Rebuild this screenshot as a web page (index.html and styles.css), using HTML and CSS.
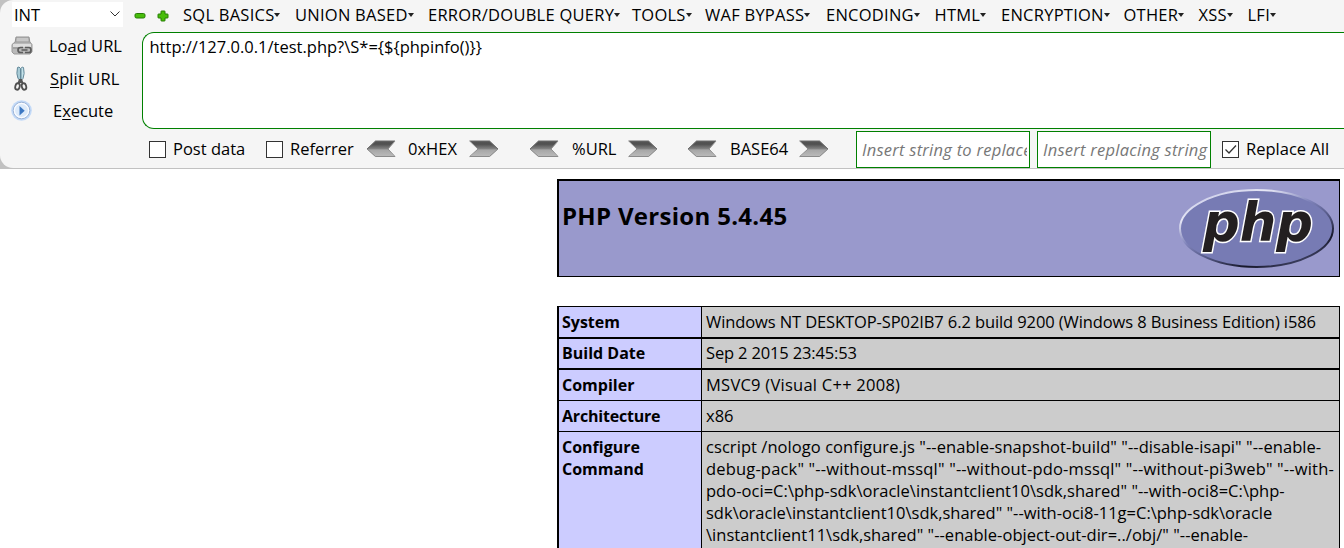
FILE: index.html
```html
<!DOCTYPE html>
<html lang="en">
<head>
<meta charset="utf-8">
<title>phpinfo()</title>
<link rel="stylesheet" href="styles.css">
</head>
<body>
<svg width="0" height="0" class="defs">
  <defs>
    <linearGradient id="steel" x1="0" y1="0" x2="0" y2="1">
      <stop offset="0" stop-color="#555"/><stop offset=".2" stop-color="#505050"/><stop offset=".5" stop-color="#858585"/><stop offset=".55" stop-color="#a6a6a6"/><stop offset="1" stop-color="#bcbcbc"/>
    </linearGradient>
    <symbol id="right" viewBox="0 0 30 18">
      <path d="M.7 1H20.5L29 9l-8.500 8H.7L9 9z" fill="url(#steel)"/>
      <path d="M.7 1H20.500L29 9" fill="none" stroke="#6a6a6a"/>
      <path d="M29 9l-8.500 7.500H.7L9 9 .7 1" fill="none" stroke="#8b8b8b"/>
    </symbol>
    <symbol id="left" viewBox="0 0 30 18">
      <path d="M29 1H9.500L1 9l8.500 8H29L22 9z" fill="url(#steel)"/>
      <path d="M29 1H9.500L1 9" fill="none" stroke="#6a6a6a"/>
      <path d="M1 9l8.500 7.500H29L22 9 29 1" fill="none" stroke="#8b8b8b"/>
    </symbol>
  </defs>
</svg>
<div class="frame">
<div class="toolbar">
  <div class="top">
    <div class="select"><span>INT</span><svg width="10" height="6" viewBox="0 0 10 6"><path d="M.5.5 5 5 9.500.5" fill="none" stroke="#333"/></svg></div>
    <svg class="minus" width="12" height="12" viewBox="0 0 12 12"><rect x="1" y="3.500" width="10" height="4.500" rx="1.500" fill="#48bd0b" stroke="#267d05"/></svg>
    <svg class="plus" width="12" height="12" viewBox="0 0 12 12"><path d="M4 1.500Q4 1 4.500 1h3Q8 1 8 1.500V4h2.500q.5 0 .5.500v3q0 .5-.5.500H8v2.500q0 .5-.5.500h-3Q4 11 4 10.500V8H1.500Q1 8 1 7.500v-3Q1 4 1.500 4H4z" fill="#48bd0b" stroke="#267d05"/></svg>
    <nav class="menu">
      <span>SQL BASICS</span><span>UNION BASED</span><span>ERROR/DOUBLE QUERY</span><span>TOOLS</span><span>WAF BYPASS</span><span>ENCODING</span><span>HTML</span><span>ENCRYPTION</span><span>OTHER</span><span>XSS</span><span>LFI</span>
    </nav>
  </div>
  <div class="middle">
    <div class="actions">
      <div class="action">
        <svg width="22" height="22" viewBox="0 0 22 22"><path d="M5 2h13l1 6H4z" fill="#b5b5b5" stroke="#929292"/><path d="M6 4h11M6 6h11" stroke="#d8d8d8"/><path d="M1 9.500 4 7h15l2 2.500V17l-2 2H3l-2-2z" fill="#b9b9b9" stroke="#999"/><path d="M2 9h18v3H2z" fill="#dedede"/><path d="M2 13h6" stroke="#8b8b8b"/><path d="M12 12.500H9.500Q7 12.500 7 15t2.500 2.500H12M14 12.500h4q2 0 2 2.500t-2 2.500h-4M10.500 15h6" fill="none" stroke="#5c5c5c" stroke-width="1.700"/></svg>
        <span class="load">Lo<u>a</u>d URL</span>
      </div>
      <div class="action">
        <svg width="22" height="26" viewBox="0 0 22 26"><path d="M6.500 1.500q-1.500 6.500.5 11l2.500 2V2.500Q8 0 6.500 1.500z" fill="#a8cbd6" stroke="#64899a"/><path d="M12.500 1.500q1.500 6.500-.5 11l-2 2V2.500Q11 0 12.500 1.500z" fill="#c4e2ea" stroke="#64899a"/><path d="M8 13h3l1.500 4h-6z" fill="#555"/><ellipse cx="6.500" cy="20.500" rx="2.200" ry="3.300" fill="none" stroke="#505050" stroke-width="1.800" transform="rotate(15 6.500 20.500)"/><ellipse cx="13" cy="20.500" rx="2.200" ry="3.300" fill="none" stroke="#505050" stroke-width="1.800" transform="rotate(-15 13 20.500)"/></svg>
        <span class="split"><u>S</u>plit URL</span>
      </div>
      <div class="action">
        <svg width="22" height="22" viewBox="0 0 22 22"><circle cx="10.500" cy="10.500" r="10.300" fill="#c3daf8"/><circle cx="10.500" cy="10.500" r="8.300" fill="#fafcff" stroke="#9bb3d6"/><circle cx="10.500" cy="10.500" r="6.500" fill="#dceafa"/><path d="M8.500 6v9.500l5.200-4.700z" fill="#3c78c3"/></svg>
        <span class="exec">E<u>x</u>ecute</span>
      </div>
    </div>
    <div class="url">http://127.0.0.1/test.php?\S*={${phpinfo()}}</div>
  </div>
  <div class="options">
    <i class="check"></i><span>Post data</span>
    <i class="check"></i><span>Referrer</span>
    <svg width="30" height="18"><use href="#left"/></svg><span>0xHEX</span><svg width="30" height="18"><use href="#right"/></svg>
    <svg width="30" height="18"><use href="#left"/></svg><span>%URL</span><svg width="30" height="18"><use href="#right"/></svg>
    <svg width="30" height="18"><use href="#left"/></svg><span>BASE64</span><svg width="30" height="18"><use href="#right"/></svg>
    <div class="field"><span>Insert string to replace</span></div>
    <div class="field"><span>Insert replacing string</span></div>
    <i class="check"><svg width="15" height="15" viewBox="0 0 15 15"><path d="M2.500 7.500 6 11l7-7.500" fill="none" stroke="#333" stroke-width="1.300"/></svg></i><span>Replace All</span>
  </div>
</div>
</div>
<main class="page">
  <header class="banner">
    <h1>PHP Version 5.4.45</h1>
    <svg class="logo" width="158" height="82" viewBox="0 0 158 82">
      <defs>
        <linearGradient id="rim" x1=".15" y1="0" x2=".85" y2="1">
          <stop offset="0" stop-color="#c5c7e6"/><stop offset=".2" stop-color="#e6e7f5"/><stop offset=".42" stop-color="#8084bb"/><stop offset=".6" stop-color="#555987"/><stop offset=".8" stop-color="#16172a"/><stop offset="1" stop-color="#53567f"/>
        </linearGradient>
      </defs>
      <ellipse cx="78.500" cy="40.500" rx="76.500" ry="38.500" fill="#777bb4" stroke="url(#rim)" stroke-width="2"/>
      <text class="mark" x="25" y="53" textLength="110" lengthAdjust="spacingAndGlyphs">php</text>
    </svg>
  </header>
  <section class="info">
    <div class="key">System</div><div class="val"><span class="sys">Windows NT DESKTOP-SP02IB7 6.2 build 9200 (Windows 8 Business Edition) i586</span></div>
    <div class="key thick">Build Date</div><div class="val thick"><span class="date">Sep 2 2015 23:45:53</span></div>
    <div class="key thick low">Compiler</div><div class="val thick low"><span class="comp">MSVC9 (Visual C++ 2008)</span></div>
    <div class="key"><span class="arch">Architecture</span></div><div class="val">x86</div>
    <div class="key">Configure<br>Command</div>
    <div class="val"><span class="l1">cscript /nologo configure.js "--enable-snapshot-build" "--disable-isapi" "--enable-</span><br><span class="l2">debug-pack" "--without-mssql" "--without-pdo-mssql" "--without-pi3web" "--with-</span><br><span class="l3">pdo-oci=C:\php-sdk\oracle\instantclient10\sdk,shared" "--with-oci8=C:\php-</span><br><span>sdk\oracle\instantclient10\sdk,shared" "--with-oci8-11g=C:\php-sdk\oracle</span><br><span class="l3">\instantclient11\sdk,shared" "--enable-object-out-dir=../obj/" "--enable-</span></div>
  </section>
</main>
</body>
</html>
```
FILE: styles.css
```css
* { box-sizing: border-box; }
body {
  margin: 0;
  width: 1344px;
  height: 548px;
  overflow: hidden;
  background: #fff;
  color: #000;
  font: 16.5px/22px "Open Sans", sans-serif;
  white-space: nowrap;
}
svg { display: block; }
.defs { position: absolute; }

.frame { background: #c1c1c1; height: 169px; padding-bottom: 1px; overflow: hidden; }
.toolbar {
  height: 168px;
  background: #f5f5f5;
  border-radius: 13px 0 0 13px;
  display: flex;
  flex-direction: column;
}
.top { display: flex; align-items: flex-start; height: 32px; flex: none; padding: 2px 0 0 12px; }
.select {
  width: 111px;
  height: 25px;
  background: #fff;
  padding: 2px 3px 0 2px;
  display: flex;
  justify-content: space-between;
}
.select svg { margin-top: 7px; }
.minus { margin: 8px 0 0 11px; }
.plus { margin: 8px 0 0 11px; }
.menu {
  margin: 2px 0 0 14px;
  display: grid;
  grid-template-columns: 112px 133px 204px 73px 121px 108.500px 66.500px 122.500px 75px 49px 40px;
  letter-spacing: .25px;
}
.menu span { display: flex; align-items: center; }
.menu span::after {
  content: "";
  border: solid transparent;
  border-width: 4px 3px 0;
  border-top-color: #222;
}

.middle { display: flex; height: 97px; flex: none; }
.actions { width: 142px; flex: none; padding-left: 11px; margin-top: -2px; }
.action { height: 32.500px; display: flex; align-items: center; }
.action span { margin-left: 16px; }
.action .split { margin-left: 17px; letter-spacing: .1px; }
.action .exec { margin-left: 20px; }
.action u { text-underline-offset: 2px; text-decoration-thickness: 1px; }
.url {
  flex: 1;
  background: #fff;
  border: 1px solid #008000;
  border-right: 0;
  border-radius: 12px 0 0 12px;
  padding: 3px 6.500px;
}

.options {
  height: 39px;
  margin-top: 1px;
  padding-left: 149px;
  display: grid;
  align-items: center;
  grid-template-columns: 24px 93px 24px 76px 42px 61px 59.500px 43.500px 56px 59px 43px 69px 57px 181px 185px 24px 90px;
}
.check { width: 17px; height: 17px; border: 1px solid #333; background: #fff; display: block; }
.field {
  width: 174px;
  height: 37px;
  border: 1px solid #008000;
  background: #fff;
  padding: 7px 2px 0 5px;
  color: #777;
  font-style: italic;
  letter-spacing: .25px;
}
.field span { display: block; overflow: hidden; }

.page { margin-left: 557px; width: 783px; padding-top: 10px; }
.banner {
  height: 98px;
  background: #9999cc;
  border: solid #000;
  border-width: 2px 1px 1px 2px;
  display: flex;
  justify-content: space-between;
}
h1 { font-size: 24px; line-height: 30px; letter-spacing: .3px; margin: 20px 0 0 3px; }
.logo { margin: 7px 3px 0 0; }
.mark {
  font: italic 700 54px "DejaVu Sans", sans-serif;
  fill: #231f20;
  stroke: #fff;
  stroke-width: 3px;
  paint-order: stroke;
}

.info {
  margin-top: 29px;
  border: solid #000;
  border-width: 0 1px 0 2px;
  display: grid;
  grid-template-columns: 142px 638px;
  grid-template-rows: 31px 31px 32px 31px 140px;
}
.key, .val { border-top: 1px solid #000; padding: 4px 4px 0; }
.key { background: #ccccff; font-weight: 700; font-size: 16px; padding-left: 3px; }
.val { background: #cccccc; border-left: 1px solid #000; }
.thick { border-top-width: 2px; padding-top: 3px; }
.low { padding-top: 4px; }
.sys { letter-spacing: -.1px; }
.date { letter-spacing: -.15px; }
.comp { letter-spacing: .25px; }
.arch { letter-spacing: -.2px; }
.l1 { letter-spacing: .06px; }
.l2 { letter-spacing: .17px; }
.l3 { letter-spacing: .03px; }
```
